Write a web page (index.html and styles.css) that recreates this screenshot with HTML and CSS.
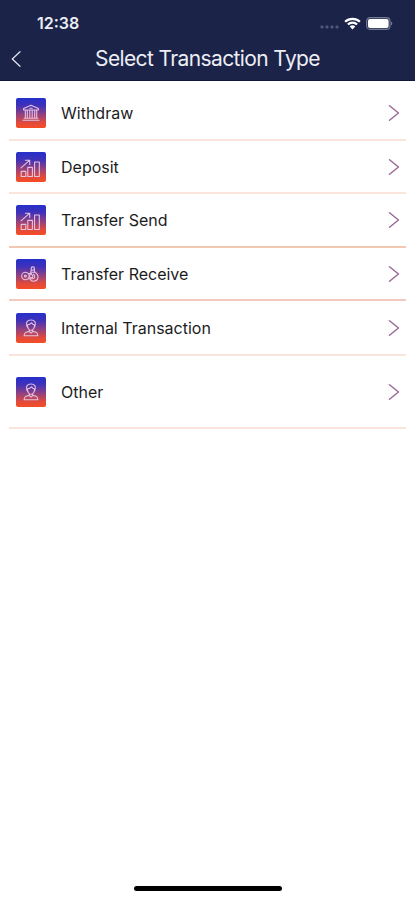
FILE: index.html
```html
<!DOCTYPE html>
<html lang="en">
<head>
<meta charset="utf-8">
<title>Select Transaction Type</title>
<link rel="stylesheet" href="styles.css">
</head>
<body>
<svg class="defs" width="0" height="0" aria-hidden="true">
  <symbol id="bank" viewBox="0 0 30 30"><path d="M7.6 12V10.4L15 7.2L22.4 10.4V12ZM9.3 12.5V20M11.3 12.5V20M13.8 12.5V20M16.2 12.5V20M18.7 12.5V20M20.7 12.5V20M8.2 20.3H21.8M7 22.2H23M13.8 10.2H16.2"/></symbol>
  <symbol id="chart" viewBox="0 0 30 30"><path d="M5.2 19.4H9.8V24.5H5.2ZM11.8 15.4H16.4V24.5H11.8ZM18.6 10H23.3V24.5H18.6ZM5.1 15.8L13.4 8.4M9.4 8.2H13.7V12.4"/></symbol>
  <symbol id="receive" viewBox="0 0 30 30"><circle cx="9.4" cy="17" r="3.7"/><circle cx="9.4" cy="17" r="1"/><circle cx="15.2" cy="17.2" r="1.7"/><path d="M12.2 14.6H15.5M12.4 19.8H15.3M14.6 13.4L15.4 10.7M18.9 13.4L18.2 10.7M14.8 13.3H18.9C23.6 15.8 22.7 22.2 17.6 22.2C15.6 22.2 14.5 21.1 14 20M17.6 15.2C19.6 16.8 18.8 19.6 16.4 19.8"/><circle cx="16.8" cy="9.6" r="1.7"/></symbol>
  <symbol id="person" viewBox="0 0 30 30"><path d="M10.8 13C9.4 9.1 11.5 7 15 7C18.7 7 20.2 9.2 19 13.1M11.5 11.8C13.8 11.6 14.7 10.7 15.8 9.8C16.2 11 17.2 11.7 18.5 11.8M11.5 11.8C11.4 15 12.9 17.2 15 17.2C17.2 17.2 18.6 15 18.5 11.8M10.8 13L12 15M19 13L17.9 15M13.3 16.5V18.4L10 19.2C8.4 19.8 8.2 21 8.1 22.8H21.9C21.8 21 21.4 19.8 20 19.2L16.7 18.4V16.5M13.3 18.6L15 20L16.7 18.6"/></symbol>
  <symbol id="next" viewBox="0 0 12 18"><path d="M1.5 1.8L10.5 9L1.5 16.2"/></symbol>
</svg>
<div class="screen">
  <header class="header">
    <div class="status">
      <span class="time">12:38</span>
      <div class="indicators">
        <svg class="signal" width="20" height="4" viewBox="0 0 20 4"><rect x="0.5" y="0.5" width="3" height="3" rx="1"/><rect x="5.5" y="0.5" width="3" height="3" rx="1"/><rect x="10.5" y="0.5" width="3" height="3" rx="1"/><rect x="15.5" y="0.5" width="3" height="3" rx="1"/></svg>
        <svg class="wifi" width="17" height="13" viewBox="0 0 17 13"><path d="M1.1 4.8C5.3 .8 11.7 .8 15.9 4.8M3.9 7.5C6.5 5.1 10.5 5.1 13.1 7.5"/><path class="dot" d="M5.7 9.4C7.3 8 9.7 8 11.3 9.4L8.5 12.4Z"/></svg>
        <svg class="battery" width="27" height="13" viewBox="0 0 27 13"><rect class="case" x=".6" y=".6" width="23.4" height="11.8" rx="3.4"/><rect class="charge" x="2" y="2" width="20.6" height="9" rx="2"/><path class="tip" d="M25 4.5C26.8 5.1 26.8 7.9 25 8.5Z"/></svg>
      </div>
    </div>
    <div class="navbar">
      <svg class="back" width="10" height="18" viewBox="0 0 10 18"><path d="M9 1.7L1.3 9L9 16.3"/></svg>
      <h1 class="title">Select Transaction Type</h1>
    </div>
  </header>
  <main class="list">
    <div class="row"><svg class="icon"><use href="#bank"/></svg><span class="label">Withdraw</span><svg class="next"><use href="#next"/></svg></div>
    <div class="row"><svg class="icon"><use href="#chart"/></svg><span class="label">Deposit</span><svg class="next"><use href="#next"/></svg></div>
    <div class="row strong"><svg class="icon"><use href="#chart"/></svg><span class="label">Transfer Send</span><svg class="next"><use href="#next"/></svg></div>
    <div class="row medium"><svg class="icon"><use href="#receive"/></svg><span class="label">Transfer Receive</span><svg class="next"><use href="#next"/></svg></div>
    <div class="row"><svg class="icon"><use href="#person"/></svg><span class="label">Internal Transaction</span><svg class="next"><use href="#next"/></svg></div>
    <div class="row"><svg class="icon"><use href="#person"/></svg><span class="label">Other</span><svg class="next"><use href="#next"/></svg></div>
  </main>
  <div class="home"></div>
</div>
</body>
</html>
```
FILE: styles.css
```css
* { box-sizing: border-box; }
body { margin: 0; background: #fff; font-family: Inter, "Liberation Sans", sans-serif; }
svg { display: block; flex: none; fill: none; stroke-linecap: round; stroke-linejoin: round; }
.defs { display: none; }
.screen { display: flex; flex-direction: column; width: 415px; height: 900px; overflow: hidden; }
.header { height: 81px; background: #1b2348; border-bottom: 1px solid #10183d; color: #edeef5; }
.status { display: flex; justify-content: space-between; align-items: center; height: 46px; padding: 0 22px 0 37px; }
.time { font-size: 16px; font-weight: 600; line-height: 20px; }
.indicators { display: flex; align-items: center; }
.signal { fill: #50577a; margin: 8px 4px 0 0; }
.wifi { stroke: #fff; stroke-width: 2.2; margin-right: 5px; stroke-linecap: butt; }
.wifi .dot { fill: #fff; stroke: none; }
.battery .case { fill: #303857; stroke: #737894; stroke-width: 1.1; }
.battery .charge { fill: #fff; }
.battery .tip { fill: #737894; }
.navbar { display: grid; grid-template-columns: 10px 1fr 10px; align-items: center; height: 24px; padding: 0 11px; }
.back { stroke: #dfe1ec; stroke-width: 1.3; }
.title { margin: 0; padding-top: 1px; font-size: 21px; font-weight: 400; line-height: 24px; text-align: center; white-space: nowrap; letter-spacing: -.62px; }
.list { display: grid; grid-template-rows: 54px 53px 54px 53px 55px 73px; padding: 6px 9px 0; }
.row { display: flex; align-items: center; padding: 0 6px; border-bottom: 2px solid #fbe4dc; }
.strong { border-color: #f3c8b3; }
.medium { border-color: #f3cabd; }
.icon { width: 30px; height: 30px; margin-left: 1px; border-radius: 2px; background: linear-gradient(#2530ca 0%, #3e31ba 25%, #94417e 56%, #e04a3d 82%, #f64d24 100%); stroke: #e5c3e0; stroke-width: 1.1; }
.label { flex: 1; margin-left: 15px; font-size: 16px; line-height: 22px; color: #1c1c1e; }
.next { width: 12px; height: 18px; stroke: #9b6699; stroke-width: 1.4; }
.home { width: 148px; height: 5px; margin: auto auto 9px 134px; border-radius: 3px; background: #000; }
```
